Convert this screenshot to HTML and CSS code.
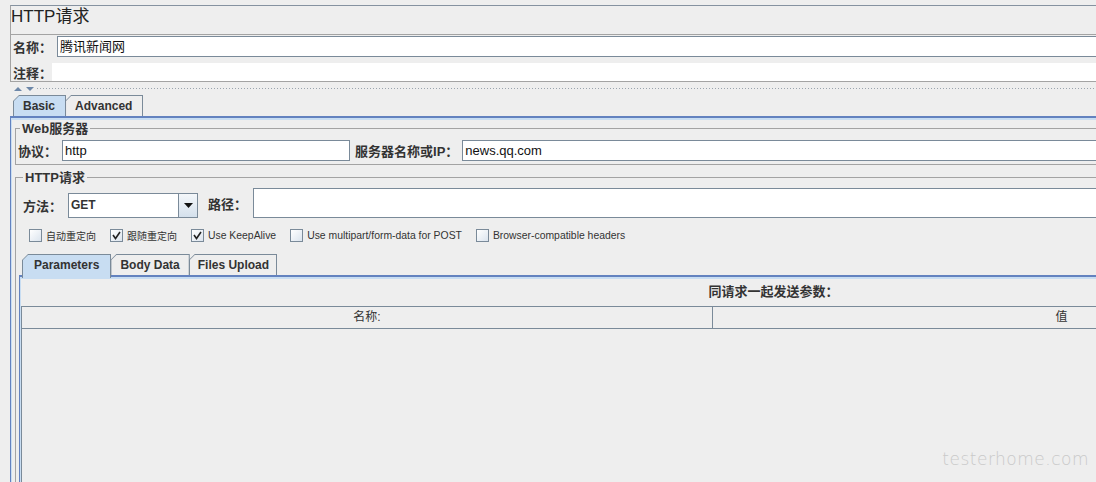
FILE: index.html
```html
<!DOCTYPE html>
<html lang="zh">
<head>
  <meta charset="UTF-8">
  <meta name="viewport" content="width=device-width, initial-scale=1.0">
  <title>HTTP请求</title>
  <link rel="stylesheet" href="styles.css">
</head>
<body>
  <div class="window">
    <div class="head">
      <div class="title">HTTP请求</div>
      <div class="name-row">
        <span class="label">名称：</span>
        <div class="field name">腾讯新闻网</div>
      </div>
      <div class="comment-row">
        <span class="label">注释：</span>
        <div class="field plain"></div>
      </div>
    </div>

    <div class="splitter">
      <svg class="arrows" width="20" height="6" viewBox="0 0 20 6">
        <path d="M0 5 L4 1 L8 5 Z" fill="#6d87a8"/>
        <path d="M12 1 L20 1 L16 5 Z" fill="#6d87a8"/>
      </svg>
      <div class="dots"></div>
    </div>

    <div class="tabpane outer">
      <div class="tabstrip">
        <div class="tab active"><span>Basic</span></div>
        <div class="tab"><span>Advanced</span></div>
      </div>
      <div class="tabbody">
        <fieldset class="group web">
          <legend>Web服务器</legend>
          <div class="row">
            <span class="label">协议：</span>
            <div class="field proto">http</div>
            <span class="label server">服务器名称或IP：</span>
            <div class="field grow">news.qq.com</div>
          </div>
        </fieldset>

        <fieldset class="group http">
          <legend>HTTP请求</legend>
          <div class="row method-row">
            <div class="pair">
              <span class="label">方法：</span>
              <div class="combo">
                <span class="combo-value">GET</span>
                <span class="combo-btn">
                  <svg width="9" height="5" viewBox="0 0 9 5"><path d="M0 0 L9 0 L4.5 5 Z" fill="#111"/></svg>
                </span>
              </div>
            </div>
            <div class="pair grow">
              <span class="label">路径：</span>
              <div class="field path"></div>
            </div>
          </div>

          <div class="options">
            <span class="opt"><span class="box"></span><span class="cjk">自动重定向</span></span>
            <span class="opt"><span class="box checked"><svg width="9" height="9" viewBox="0 0 9 9"><path d="M1 4 L3.5 7.5 L8 1" stroke="#222" stroke-width="1.6" fill="none"/></svg></span><span class="cjk">跟随重定向</span></span>
            <span class="opt"><span class="box checked"><svg width="9" height="9" viewBox="0 0 9 9"><path d="M1 4 L3.5 7.5 L8 1" stroke="#222" stroke-width="1.6" fill="none"/></svg></span>Use KeepAlive</span>
            <span class="opt"><span class="box"></span>Use multipart/form-data for POST</span>
            <span class="opt"><span class="box"></span>Browser-compatible headers</span>
          </div>

          <div class="tabpane inner">
            <div class="tabstrip">
              <div class="tab active params"><span>Parameters</span></div>
              <div class="tab body-data"><span>Body Data</span></div>
              <div class="tab files"><span>Files Upload</span></div>
            </div>
            <div class="tabbody">
              <div class="args-title">同请求一起发送参数：</div>
              <div class="table">
                <div class="thead">
                  <div class="th first">名称:</div>
                  <div class="th">值</div>
                </div>
              </div>
            </div>
          </div>
        </fieldset>
      </div>
    </div>
  </div>

  <div class="watermark">testerhome.com</div>
</body>
</html>
```

FILE: styles.css
```css
/* Page */
* {
box-sizing: border-box;
}

html, body {
margin: 0;
}

body {
position: relative;
width: 1096px;
height: 482px;
overflow: hidden;
padding: 5px 0 0 10px;
background: #eeeeee;
font-family: "Liberation Sans", "Noto Sans CJK SC", sans-serif;
font-size: 13px;
color: #333;
}

.window {
width: 1524px;
}

/* Title, name and comment block */
.head {
border: 1px solid #a3a3a3;
border-top-color: #8592a0;
border-right: none;
}

.title {
height: 29px;
font-size: 17px;
line-height: 21px;
color: #222;
border-bottom: 1px solid #a3a3a3;
}

.label {
font-weight: bold;
font-size: 13px;
white-space: nowrap;
}

.name-row {
display: flex;
align-items: center;
height: 28px;
padding: 1px 0 6px 2px;
}

.comment-row {
display: flex;
align-items: center;
height: 18px;
padding-left: 2px;
}

.field {
height: 21px;
background: #fff;
border: 1px solid #7a8a99;
border-right: none;
padding-left: 2px;
line-height: 19px;
font-size: 13px;
color: #111;
}

.field.name {
flex: 1;
margin-left: 5px;
}

.field.plain {
flex: 1;
height: 18px;
border: none;
}

/* Splitter */
.splitter {
display: flex;
align-items: center;
height: 13px;
padding-left: 4px;
}

.arrows {
flex: none;
}

.dots {
flex: 1;
height: 1px;
margin-left: 3px;
background-image: linear-gradient(90deg, #9aa4ae 1px, transparent 1px);
background-size: 3px 1px;
}

/* Tabbed panes */
.tabstrip {
display: flex;
align-items: flex-end;
padding-left: 3px;
}

.tab {
background: #7a8a99;
padding: 1px 1px 0 1px;
clip-path: polygon(0 6px, 6px 0, 100% 0, 100% 100%, 0 100%);
}

.tab + .tab {
margin-left: -1px;
}

.tab span {
display: block;
height: 100%;
background: #eeeeee;
clip-path: polygon(0 5px, 5px 0, 100% 0, 100% 100%, 0 100%);
font-weight: bold;
font-size: 12px;
color: #333;
}

.tab.active span {
background: #c8ddf2;
}

.outer > .tabstrip {
height: 21px;
}

.outer .tab {
height: 21px;
}

.outer > .tabstrip .tab span {
padding: 0 10px 0 9px;
line-height: 20px;
}

.tabbody {
border-top: 2px solid #6382bf;
border-left: 1px solid #6382bf;
box-shadow: inset 1px 2px 0 #c8ddf2;
}

.outer > .tabbody {
padding: 3px 4px 0 4px;
}

/* Titled groups */
.group {
margin: 0;
border: 1px solid #a3a3a3;
padding: 0;
min-width: 0;
}

.group legend {
margin-left: 4px;
padding: 0 2px;
font-weight: bold;
font-size: 13px;
line-height: 15px;
color: #333;
}

.row {
display: flex;
align-items: center;
}

.web .row {
padding: 4px 0 3px 2px;
}

.web .field.proto {
width: 288px;
margin: 0 5px 0 5px;
border-right: 1px solid #7a8a99;
}

.label.server {
margin-right: 4px;
}

.grow {
flex: 1;
}

.http {
margin-top: 5px;
height: 340px;
padding: 3px 3px 0 3px;
}

.method-row {
align-items: flex-end;
padding-left: 4px;
}

.pair {
display: flex;
align-items: center;
}

.combo {
display: flex;
width: 130px;
height: 25px;
margin: 0 10px 0 6px;
border: 1px solid #7a8a99;
background: #fff;
}

.combo-value {
flex: 1;
padding-left: 2px;
font-weight: bold;
font-size: 12px;
line-height: 23px;
}

.combo-btn {
display: flex;
align-items: center;
justify-content: center;
width: 19px;
border-left: 1px solid #7a8a99;
background: linear-gradient(#f4f7fa, #d4e0ec);
}

.field.path {
flex: 1;
height: 30px;
margin-left: 6px;
}

/* Checkboxes */
.options {
display: flex;
align-items: center;
height: 13px;
margin-top: 11px;
padding-left: 10px;
font-size: 10.4px;
color: #333;
}

.opt {
display: flex;
align-items: center;
margin-right: 14px;
white-space: nowrap;
}

.opt .cjk {
font-size: 10px;
}

.box {
display: flex;
align-items: center;
justify-content: center;
width: 13px;
height: 13px;
margin-right: 4px;
border: 1px solid #7a8a99;
background: linear-gradient(135deg, #ffffff, #dbe4ee);
}

/* Inner tabbed pane */
.inner {
margin-top: 12px;
}

.inner > .tabstrip {
height: 21px;
}

.inner .tab {
height: 21px;
}

.inner .tab.active {
height: 24px;
margin-bottom: -3px;
position: relative;
}

.inner > .tabstrip .tab span {
line-height: 20px;
}

.inner .params span {
padding: 0 11px;
}

.inner .body-data span {
padding: 0 9px;
}

.inner .files span {
padding: 0 7px 0 8px;
}

.inner > .tabbody {
height: 240px;
padding: 7px 0 0 1px;
}

.args-title {
text-align: center;
font-weight: bold;
font-size: 13px;
line-height: 15px;
}

.table {
margin-top: 7px;
width: 1390px;
height: 200px;
border: 1px solid #7a8a99;
}

.thead {
display: grid;
grid-template-columns: 691px 1fr;
height: 22px;
border-bottom: 1px solid #7a8a99;
}

.th {
text-align: center;
font-size: 12px;
line-height: 21px;
color: #333;
}

.th.first {
border-right: 1px solid #7a8a99;
}

/* Watermark over the corner */
.watermark {
position: absolute;
right: 7px;
bottom: 13px;
font-family: "DejaVu Sans", sans-serif;
font-weight: 200;
font-size: 17px;
letter-spacing: 0.5px;
color: #c9c9c9;
}
```
